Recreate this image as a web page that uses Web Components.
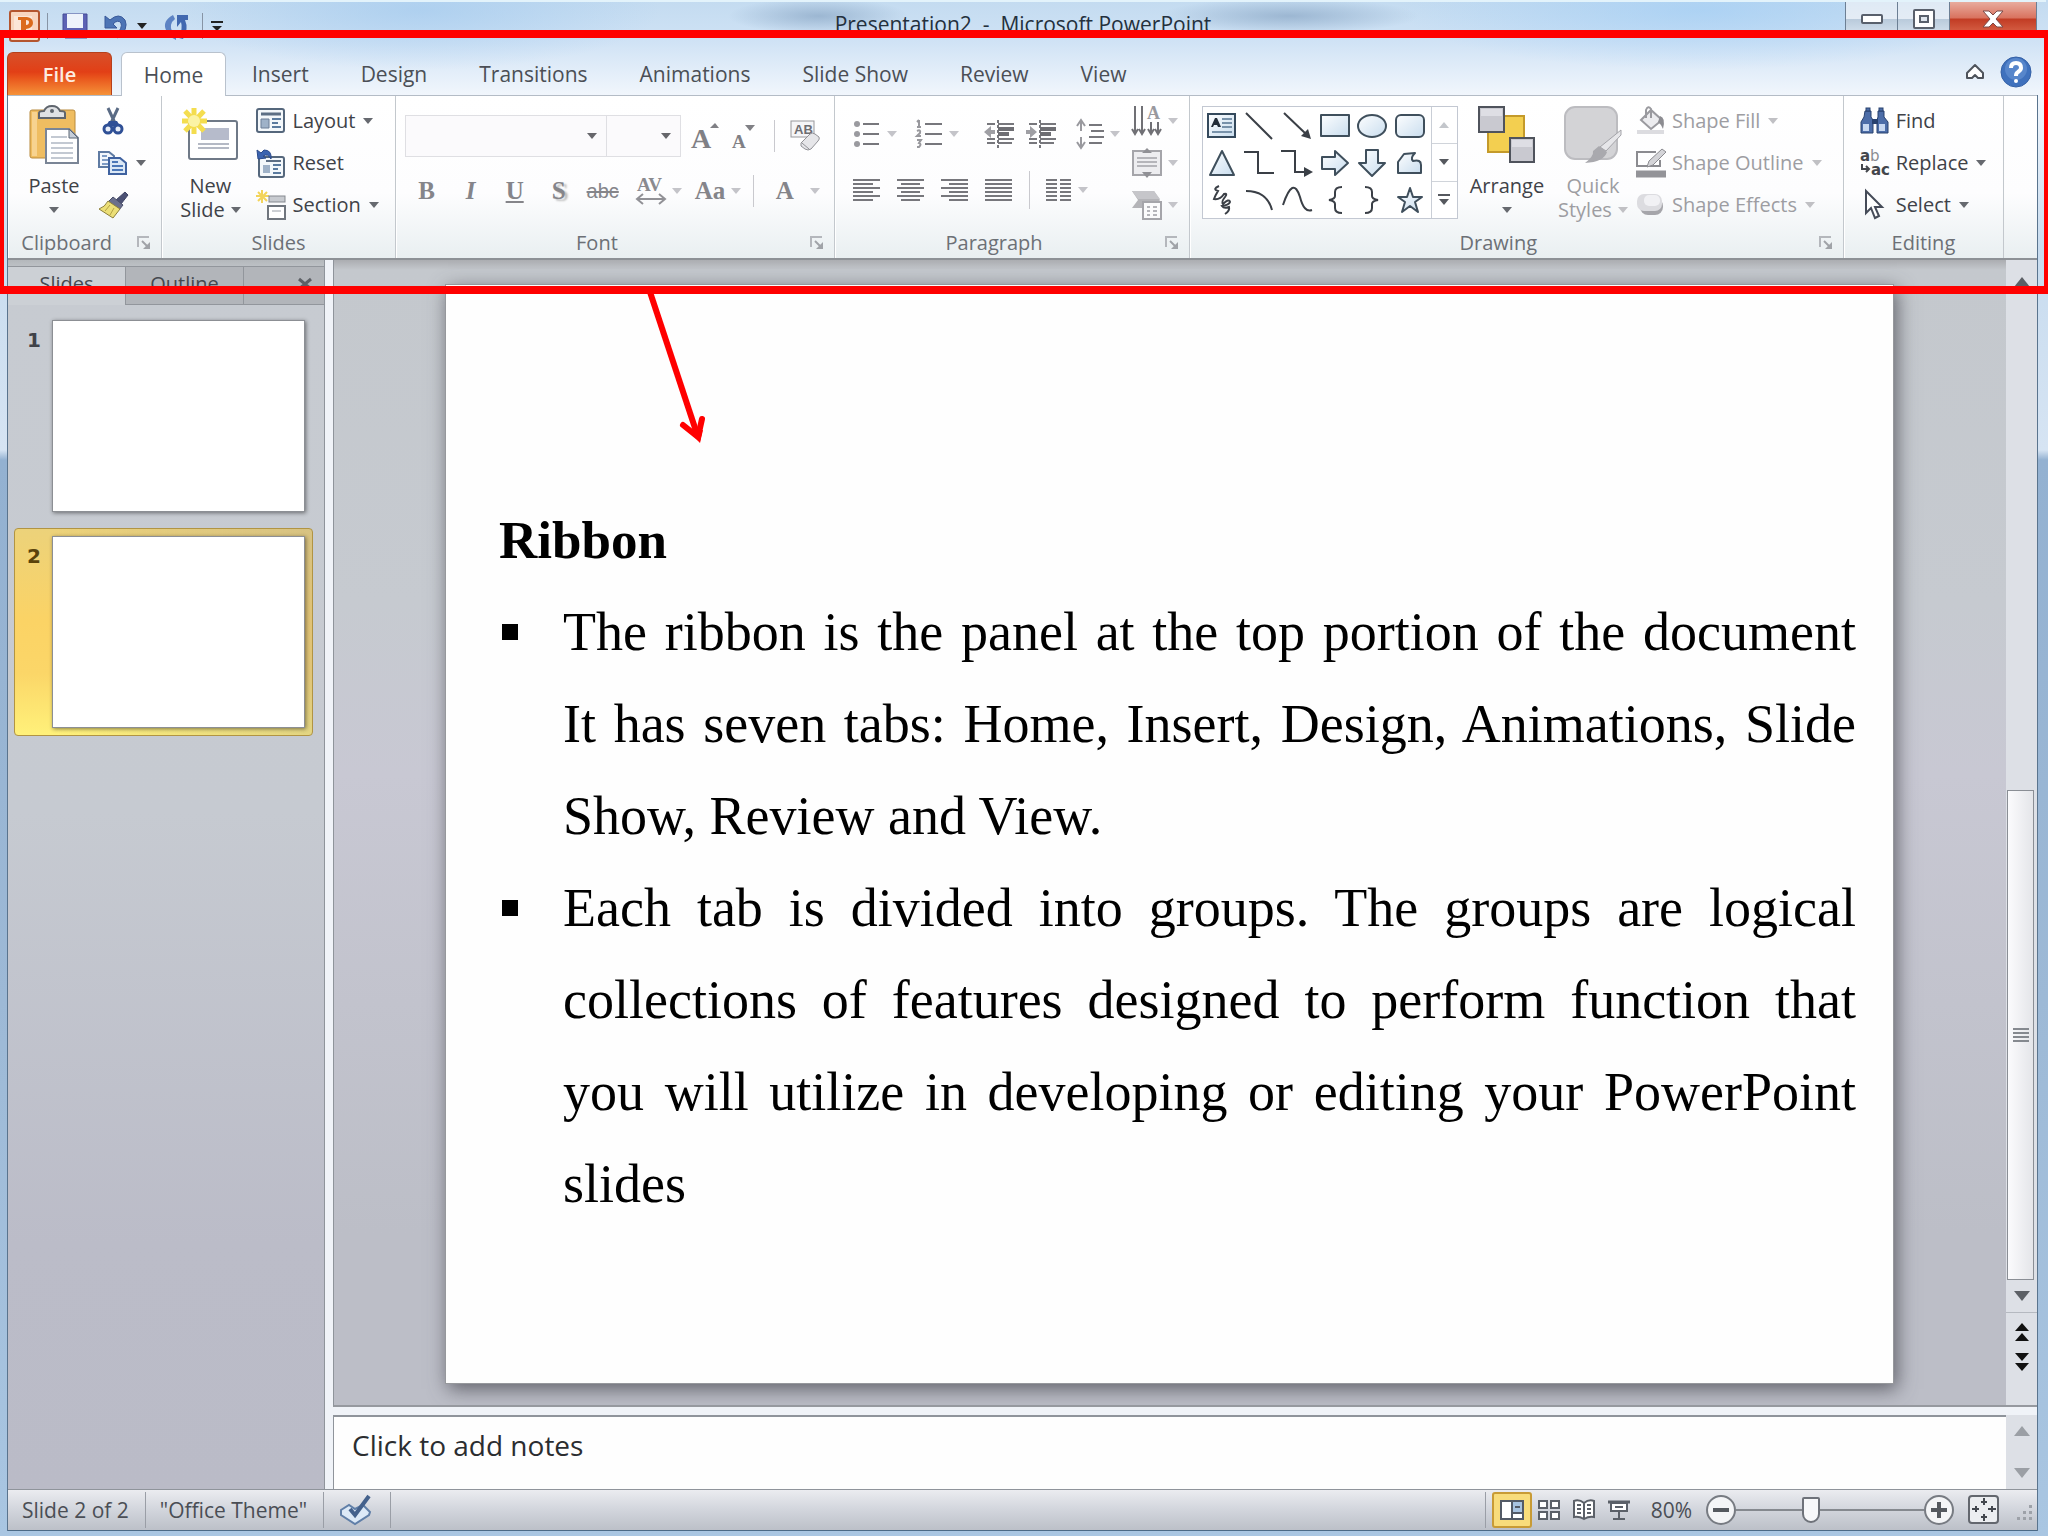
<!DOCTYPE html>
<html lang="en">
<head>
<meta charset="utf-8">
<title>Presentation2 - Microsoft PowerPoint</title>
<style>
  body { margin: 0; font-family: "Open Sans", "Noto Sans", sans-serif; font-size: 20px; color: #3f4248; }
</style>
</head>
<body>
<pp-app></pp-app>

<script>
const BASE = `
  :host, *, *::before, *::after { box-sizing: border-box; }
  button, select, textarea, input { font: inherit; color: inherit; margin: 0; }
  button { background: none; border: 0; padding: 0; display: flex; align-items: center; }
`;

function define(name, css, html) {
  customElements.define(name, class extends HTMLElement {
    connectedCallback() {
      if (this.shadowRoot) return;
      const root = this.attachShadow({ mode: 'open' });
      const body = typeof html === 'function' ? html(this) : html;
      root.innerHTML = `<style>${BASE}${css}</style>${body}`;
    }
  });
}

/* ---------- icons: [width, height, markup] ---------- */
const lines = (list, c = '#77777c', w = 2) => `<path d="${list.map(([x1, x2, y]) => `M${x1} ${y}H${x2}`).join('')}" stroke="${c}" stroke-width="${w}" fill="none"/>`;
const shape = d => `<path d="${d}" fill="url(#g)" stroke="#3f4f5c" stroke-width="2" stroke-linejoin="round"/>`;
const stroke = d => `<path d="${d}" fill="none" stroke="#3a3f46" stroke-width="2"/>`;
const G = `<defs><linearGradient id="g" x1="0" y1="0" x2="1" y2="1"><stop offset="0" stop-color="#fdfeff"/><stop offset="1" stop-color="#c9ddee"/></linearGradient></defs>`;

const ICONS = {
  down: [10, 6, `<path d="M0 0H10L5 6Z" fill="currentColor"/>`],
  up: [10, 6, `<path d="M0 6H10L5 0Z" fill="currentColor"/>`],
  bigdown: [16, 10, `<path d="M0 0H16L8 10Z" fill="currentColor"/>`],
  bigup: [16, 10, `<path d="M0 10H16L8 0Z" fill="currentColor"/>`],
  dblup: [14, 18, `<path d="M0 8L7 0L14 8ZM0 18L7 10L14 18Z" fill="#111"/>`],
  dbldown: [14, 18, `<path d="M0 0L7 8L14 0ZM0 10L7 18L14 10Z" fill="#111"/>`],
  more: [12, 11, `<path d="M0 1H12" stroke="currentColor" stroke-width="2"/><path d="M1 5H11L6 11Z" fill="currentColor"/>`],
  custom: [12, 9, `<path d="M0 1H12" stroke="#222" stroke-width="2"/><path d="M1 5H11L6 10Z" fill="#222"/>`],
  launcher: [14, 14, `<path d="M1 11V1H12" fill="none" stroke="#b4b7bc" stroke-width="2"/><path d="M5 5L11 11" stroke="#a0a3a8" stroke-width="2"/><path d="M13 6V13H6Z" fill="#a0a3a8"/>`],
  ppt: [31, 32, `<rect x="1" y="1" width="29" height="30" rx="2" fill="#f8d5bf" stroke="#b4552f" stroke-width="2"/><path d="M5 6H23V26H5Z" fill="#fbe6d8"/><path d="M9 26V23H12V10H9V7H18Q24 8 24 13Q24 18 17 19V23H19V26ZM17 10V15Q20 15 20 12Q20 10 17 10Z" fill="#db6a1c" fill-rule="evenodd"/>`],
  save: [26, 26, `<path d="M1 1H25V25H3L1 23Z" fill="#5d62b4" stroke="#444a96"/><path d="M5 1H21V15H5Z" fill="#eef3fb"/><path d="M6 18H20V25H6Z" fill="#dfe4f2"/><path d="M9 19H13V25H9Z" fill="#4a4f9c"/>`],
  undo: [24, 26, `<path d="M1 3V15H13L9 11Q14 6 17 10Q19 15 11 23L14 25Q25 16 21 7Q15 -1 6 7Z" fill="#4d74b5" stroke="#39599a"/>`],
  redo: [25, 26, `<path d="M9 2Q-2 8 2 17Q5 24 12 27L12 23Q6 17 7 12Q8 8 11 6Z" fill="#5d83c4"/><path d="M13 2H24V7H21Q25 16 19 26L15 25Q19 15 17 9L13 14Z" fill="#4168b0"/>`],
  paste: [50, 60, `<rect x="1" y="5" width="45" height="48" rx="2" fill="#efbd61" stroke="#b98a3d"/><path d="M3 7H8V51H3Z" fill="#f7d390"/><path d="M10 13V8Q10 6 15 6Q17 1 23 1Q29 1 31 6Q36 6 36 8V13Z" fill="#dfe1e4" stroke="#5f656d" stroke-width="2"/><circle cx="23" cy="6" r="2" fill="#5f656d"/><path d="M17 24H40L49 33V58H17Z" fill="#fff" stroke="#7a8596" stroke-width="2"/><path d="M40 24V33H49Z" fill="#c6ced9" stroke="#5b6675"/>${lines([[22, 38, 32], [22, 44, 38], [22, 44, 43], [22, 44, 48], [22, 44, 53]], '#c3c9d2')}`],
  cut: [30, 28, `<path d="M10 1L17 16M20 1L13 16" stroke="#5a6b85" stroke-width="3"/><path d="M11 14H19L22 19H8Z" fill="#2f5096"/><ellipse cx="10" cy="22" rx="4" ry="4" fill="#e8eef8" stroke="#2f5096" stroke-width="3"/><ellipse cx="20" cy="22" rx="4" ry="4" fill="#e8eef8" stroke="#2f5096" stroke-width="3"/>`],
  copy: [30, 26, `<path d="M1 2H11L16 6V17H1Z" fill="#f3f7fc" stroke="#5f7ba3" stroke-width="2"/>${lines([[4, 9, 6], [4, 12, 10], [4, 12, 14]], '#7f9cc4')}<path d="M11 8H22L28 13V24H11Z" fill="#dbe8f6" stroke="#3f62a0" stroke-width="2"/>${lines([[14, 20, 12], [14, 25, 16], [14, 25, 20]], '#4c78b8')}`],
  painter: [30, 28, `<path d="M27 1L30 4L23 13L18 9Z" fill="#4c5174" stroke="#3e4364"/><path d="M15 6L25 14L21 19L10 11Z" fill="#6a6f8c" stroke="#4a4f6a"/><path d="M10 10L22 18L15 27L1 18Q7 16 10 10Z" fill="#ecdf77" stroke="#8d803a"/><path d="M12 14L7 20M16 17L12 24" stroke="#b4a345"/>`],
  newslide: [56, 54, `<rect x="7" y="13" width="48" height="38" rx="2" fill="#fff" stroke="#6f7987" stroke-width="2"/><rect x="19" y="20" width="28" height="12" fill="#b6bbcb"/>${lines([[16, 47, 36], [16, 47, 40]], '#b4b9c4', 2)}<path d="M12 0V26M0 13H25M3 3L22 23M22 3L3 23" stroke="#f4dd4f" stroke-width="5"/><circle cx="12" cy="13" r="6" fill="#fbf3a5"/>`],
  layout: [30, 26, `<rect x="1" y="1" width="27" height="23" rx="2" fill="#f4f8fb" stroke="#55677c" stroke-width="2"/><path d="M5 6H25" stroke="#5d6f85" stroke-width="3"/><path d="M5 11H13V20H5Z" fill="#9fb2c8" stroke="#6c7f97"/>${lines([[16, 25, 11], [16, 22, 15], [16, 25, 19]], '#5b7b9f')}`],
  reset: [30, 30, `<rect x="3" y="9" width="25" height="20" rx="2" fill="#f4f8fb" stroke="#55677c" stroke-width="2"/><path d="M10 13H25" stroke="#5d6f85" stroke-width="2"/><path d="M7 17H14V25H7Z" fill="#9fb2c8"/>${lines([[17, 25, 17], [17, 22, 21], [17, 25, 25]], '#5b7b9f')}<path d="M1 2L2 11L10 10L7 8Q12 5 15 11Q16 2 8 2L5 5Z" fill="#3c64b0" stroke="#2a4a8c"/>`],
  section: [30, 30, `<path d="M6 0V13M0 6H13M2 2L11 11M11 2L2 11" stroke="#f3d45a" stroke-width="2"/><rect x="13" y="6" width="16" height="6" fill="#c8cbd0" stroke="#85898f"/><rect x="12" y="16" width="17" height="13" fill="#fff" stroke="#6f757d" stroke-width="2"/><path d="M16 21H25" stroke="#9aa0a8"/>`],
  eraser: [32, 30, `<rect x="1" y="0" width="23" height="16" fill="#f5f5f7" stroke="#98989c"/><text x="4" y="13" font-family="Liberation Sans" font-size="13" fill="#6d6d72">AB</text><path d="M11 22L20 13Q22 11 25 13L29 16Q30 18 28 20L21 28Q18 30 15 28L11 25Z" fill="#e6e6e9" stroke="#929297"/><path d="M12 22L19 28" stroke="#929297"/>`],
  growA: [28, 26, `<text x="0" y="25" font-family="Liberation Serif" font-weight="bold" font-size="28" fill="#808085">A</text><path d="M19 5L24 0L28 5Z" fill="#808085"/>`],
  shrinkA: [24, 26, `<text x="0" y="25" font-family="Liberation Serif" font-weight="bold" font-size="19" fill="#808085">A</text><path d="M13 2H23L18 8Z" fill="#808085"/>`],
  spacingAV: [30, 30, `<text x="1" y="15" font-family="Liberation Serif" font-size="19" font-weight="bold" fill="#8a8a8f">AV</text><path d="M1 23H29M7 18L1 23L7 28M23 18L29 23L23 28" stroke="#919196" stroke-width="2" fill="none"/>`],
  bullets: [28, 26, `<g fill="#9a9a9f"><circle cx="4" cy="3" r="3"/><circle cx="4" cy="13" r="3"/><circle cx="4" cy="23" r="3"/></g>${lines([[10, 26, 3], [10, 26, 13], [10, 26, 23]])}`],
  numbers: [28, 28, `<path d="M4 0V7M2 2L4 0M2 7H6M2 11Q6 9 5 13L2 16H6M2 20H6L4 23Q7 24 4 27H2" stroke="#98989d" fill="none" stroke-width="2"/>${lines([[10, 27, 4], [10, 27, 14], [10, 27, 24]])}`],
  outdent: [30, 28, `<path d="M14 0V28" stroke="#77777c" stroke-width="2" stroke-dasharray="3 2"/>${lines([[3, 11, 4], [3, 11, 19], [3, 11, 23], [14, 30, 4], [14, 30, 19], [14, 28, 23]])}<path d="M14 9H30M14 14H25" stroke="#6e6e73" stroke-width="4"/><path d="M0 12L7 6V10H11V14H7V18Z" fill="#9f9fa4"/>`],
  indent: [30, 28, `<path d="M14 0V28" stroke="#77777c" stroke-width="2" stroke-dasharray="3 2"/>${lines([[3, 11, 4], [3, 11, 19], [3, 11, 23], [14, 30, 4], [14, 30, 19], [14, 28, 23]])}<path d="M14 9H30M14 14H25" stroke="#6e6e73" stroke-width="4"/><path d="M11 12L4 6V10H0V14H4V18Z" fill="#9f9fa4"/>`],
  linespace: [28, 30, `<path d="M5 2V12M1 7L5 1L9 7M5 18V28M1 23L5 29L9 23" stroke="#99999e" stroke-width="2" fill="none"/>${lines([[13, 26, 6], [15, 28, 12], [13, 28, 18], [13, 26, 24]])}`],
  left: [28, 24, lines([[0, 27, 2], [0, 20, 6], [0, 27, 10], [0, 20, 14], [0, 27, 18], [0, 20, 22]])],
  center: [28, 24, lines([[0, 27, 2], [4, 23, 6], [0, 27, 10], [4, 23, 14], [0, 27, 18], [4, 23, 22]])],
  right: [28, 24, lines([[0, 27, 2], [8, 27, 6], [0, 27, 10], [8, 27, 14], [0, 27, 18], [8, 27, 22]])],
  justify: [28, 24, lines([[0, 27, 2], [0, 27, 6], [0, 27, 10], [0, 27, 14], [0, 27, 18], [0, 27, 22]])],
  columns: [26, 24, lines([2, 6, 10, 14, 18, 22].flatMap(y => [[0, 11, y], [14, 25, y]]))],
  textdir: [30, 30, `<path d="M3 0V27M10 0V27M19 16V27M26 16V27M0 23L3 28L6 23M7 23L10 28L13 23M16 23L19 28L22 23M23 23L26 28L29 23" stroke="#707075" stroke-width="2" fill="none"/><text x="15" y="13" font-family="Liberation Serif" font-size="18" font-weight="bold" fill="#99999e">A</text>`],
  aligntext: [30, 30, `<rect x="1" y="3" width="28" height="24" fill="#ededf0" stroke="#a5a5aa" stroke-width="2"/>${lines([[5, 25, 10], [5, 25, 14], [5, 25, 18]], '#b5b5ba')}<path d="M15 0L20 5H10ZM15 30L20 24H10Z" fill="#909095"/>`],
  smartart: [30, 30, `<path d="M0 1H22L28 10L22 18H0L6 10Z" fill="#b4b4b8"/><path d="M0 1H22L28 9H6Z" fill="#c6c6ca"/><rect x="11" y="12" width="18" height="17" fill="#fbfbfc" stroke="#a5a5aa" stroke-width="2"/>${lines([[15, 18, 17], [21, 25, 17], [15, 18, 21], [21, 25, 21], [15, 18, 25], [21, 25, 25]], '#b5b5ba')}`],
  textbox: [30, 26, G + `<rect x="1" y="1" width="27" height="23" fill="url(#g)" stroke="#34495c" stroke-width="2"/><path d="M4 14L8 5H10L14 14H11L10 12H7L6 14Z" fill="#222c38"/>${lines([[15, 25, 6], [15, 25, 10], [15, 25, 14], [5, 25, 19]], '#7892aa')}`],
  line: [30, 28, stroke('M2 1L28 27')],
  arrow: [30, 28, stroke('M2 1L24 22') + `<path d="M29 27L19 24L26 17Z" fill="#3a3f46"/>`],
  rect: [30, 24, G + shape('M1 1H29V22H1Z')],
  oval: [30, 24, G + `<ellipse cx="15" cy="12" rx="14" ry="11" fill="url(#g)" stroke="#3f4f5c" stroke-width="2"/>`],
  round: [30, 24, G + `<rect x="1" y="1" width="28" height="22" rx="5" fill="url(#g)" stroke="#3f4f5c" stroke-width="2"/>`],
  triangle: [26, 28, G + shape('M13 2L25 26H1Z')],
  elbow: [30, 26, stroke('M0 2H14V23H30')],
  elbowarrow: [32, 28, stroke('M0 2H14V23H25') + `<path d="M23 18L32 23L23 28Z" fill="#3a3f46"/>`],
  arrowr: [28, 28, G + shape('M1 8H14V2L27 14L14 26V20H1Z')],
  arrowd: [28, 28, G + shape('M8 1H20V14H27L14 27L1 14H8Z')],
  freeform: [26, 22, G + shape('M7 2L18 1Q13 6 16 9Q24 7 24 13V21H1V10Z')],
  scribble: [22, 30, stroke('M8 1Q1 4 7 6Q4 11 3 14Q9 15 13 9Q17 8 14 12Q10 17 12 19Q18 13 19 17Q18 20 11 21Q13 24 18 22Q19 26 14 29')],
  arc: [28, 22, stroke('M1 2Q22 2 27 21')],
  curve: [30, 26, stroke('M1 18Q11 -12 18 10Q22 26 30 23')],
  braceL: [16, 28, stroke('M15 1Q8 1 8 6V10Q8 13 2 14Q8 15 8 18V22Q8 27 15 27')],
  braceR: [16, 28, stroke('M1 1Q8 1 8 6V10Q8 13 14 14Q8 15 8 18V22Q8 27 1 27')],
  star: [28, 28, G + shape('M14 2L17 11H26L19 16L22 26L14 20L6 26L9 16L2 11H11Z')],
  arrange: [58, 58, `<rect x="10" y="10" width="36" height="36" fill="#f3cf50" stroke="#c49a2a" stroke-width="2"/><g fill="#c9c9d0" stroke="#4f535c" stroke-width="2"><rect x="1" y="1" width="25" height="25"/><rect x="32" y="32" width="24" height="24"/></g><path d="M3 3H24V10H3ZM34 34H54V41H34Z" fill="#dedee4"/>`],
  quick: [58, 58, `<rect x="1" y="1" width="52" height="52" rx="10" fill="#d3d3d6" stroke="#bcbcc0" stroke-width="2"/><path d="M57 24V29L42 45L36 41Z" fill="#e6e6e9" stroke="#a4a4a9"/><path d="M35 40L43 46Q40 56 21 57Q30 50 29 45Z" fill="#a9a9ae"/>`],
  fill: [30, 30, `<path d="M5 14L15 4L26 14L15 23Z" fill="#ececef" stroke="#9a9a9f" stroke-width="2"/><path d="M10 12V4Q12 -1 15 3V12" fill="none" stroke="#9a9a9f" stroke-width="2"/><path d="M24 10Q30 12 27 23Q25 18 22 16Z" fill="#8c8c91"/><path d="M1 26H28" stroke="#dcdce0" stroke-width="4"/>`],
  outline: [30, 30, `<path d="M20 4H1V18H24V12" fill="none" stroke="#8b8b90" stroke-width="2"/><path d="M26 1L30 4L17 17L11 19L13 13Z" fill="#d4d4d8" stroke="#8b8b90"/><path d="M0 26H30" stroke="#939398" stroke-width="7"/>`],
  effects: [30, 30, `<rect x="4" y="8" width="23" height="17" rx="8" fill="#a5a5aa"/><rect x="1" y="4" width="25" height="17" rx="7" fill="#dcdce0"/><rect x="8" y="5" width="16" height="11" rx="5" fill="#f1f1f4"/>`],
  find: [30, 28, `<g fill="#4c6da8" stroke="#29426f"><path d="M5 4H11V10L13 13V26H1V15L4 10Z"/><path d="M18 4H24V10L28 15V26H17V13L18 10Z"/><rect x="6" y="1" width="4" height="3"/><rect x="19" y="1" width="4" height="3"/></g><path d="M3 17H9V24H3ZM19 17H25V24H19Z" fill="#c7d8f1"/><path d="M12 12H18V17H12Z" fill="#29426f"/>`],
  replace: [30, 30, `<g font-family="DejaVu Sans" font-weight="bold" fill="#43464c"><text x="0" y="13" font-size="15">a</text><text x="10" y="13" font-size="15" font-weight="normal" fill="#8a8d93">b</text><text x="11" y="27" font-size="15">ac</text></g><path d="M2 16V21H8M6 18L9 21L6 24" fill="none" stroke="#43464c" stroke-width="2"/>`],
  select: [30, 30, `<path d="M6 1V23L11 18L15 28L19 26L15 17H22Z" fill="#fff" stroke="#454b58" stroke-width="2"/>`],
  chevron: [18, 16, `<path d="M1 9L9 1L17 9V14H12L9 11L6 14H1Z" fill="#fff" stroke="#4e535b" stroke-width="2" stroke-linejoin="round"/>`],
  help: [32, 32, `<circle cx="16" cy="16" r="15" fill="#3f71bd" stroke="#3561a6"/><circle cx="16" cy="13" r="11" fill="#6f9bd9" opacity=".5"/><path d="M11 12Q11 7 16 7Q21 7 21 12Q21 14 18 16Q16 17 16 20" stroke="#fff" stroke-width="4" fill="none"/><circle cx="16" cy="25" r="2" fill="#fff"/>`],
  min: [22, 10, `<rect x="1" y="1" width="20" height="8" rx="1" fill="#fff" stroke="#59606c" stroke-width="2"/>`],
  max: [22, 20, `<rect x="1" y="1" width="20" height="18" rx="1" fill="#fff" stroke="#59606c" stroke-width="2"/><rect x="7" y="7" width="8" height="6" fill="#dfe6ee" stroke="#59606c" stroke-width="2"/>`],
  close: [22, 18, `<path d="M1 1H7L11 5L15 1H21L14 9L21 17H15L11 13L7 17H1L8 9Z" fill="#fff" stroke="#7b4a48"/>`],
  x: [14, 12, `<path d="M1 1L13 11M13 1L1 11" stroke="#5d6066" stroke-width="3"/>`],
  spell: [34, 30, `<path d="M2 15L10 10L16 14L24 10L31 17L30 20L16 29L2 20Z" fill="#dce9f7" stroke="#607fa8" stroke-width="2"/><path d="M11 14L16 20L30 1" fill="none" stroke="#44618c" stroke-width="4"/>`],
  normal: [24, 20, `<rect x="1" y="1" width="22" height="18" fill="#fff" stroke="#535a66" stroke-width="2"/><rect x="13" y="2" width="9" height="10" fill="#a8c3e0"/><path d="M12 1V19M12 13H23M15 7H20" stroke="#535a66" stroke-width="2"/>`],
  sorter: [22, 20, `<g fill="#fff" stroke="#5b6068" stroke-width="2"><rect x="1" y="1" width="8" height="7"/><rect x="13" y="1" width="8" height="7"/><rect x="1" y="12" width="8" height="7"/><rect x="13" y="12" width="8" height="7"/></g>`],
  reading: [22, 22, `<path d="M11 4Q6 0 1 2V18Q6 17 11 20Q16 17 21 18V2Q16 0 11 4V20" fill="#fff" stroke="#5b6068" stroke-width="2"/><path d="M4 6H8M4 10H8M4 14H8M14 6H18M14 10H18M14 14H18" stroke="#5b6068" stroke-width="2"/>`],
  show: [22, 20, `<path d="M0 2H22" stroke="#5b6068" stroke-width="3"/><path d="M3 3H19V11H3Z" fill="#fff" stroke="#5b6068" stroke-width="2"/><path d="M7 7H15M11 11V18M5 19H17" stroke="#5b6068" stroke-width="2"/>`],
  minus: [30, 30, `<circle cx="15" cy="15" r="14" fill="#f4f5f7" stroke="#777b82" stroke-width="2"/><path d="M7 15H23" stroke="#55595f" stroke-width="4"/>`],
  plus: [30, 30, `<circle cx="15" cy="15" r="14" fill="#f4f5f7" stroke="#777b82" stroke-width="2"/><path d="M7 15H23M15 7V23" stroke="#55595f" stroke-width="4"/>`],
  fit: [32, 30, `<rect x="1" y="1" width="29" height="27" rx="3" fill="#eceef1" stroke="#63676e" stroke-width="2"/><path d="M16 3V10M16 19V26M4 14H11M20 14H28M13 7H19M13 22H19M8 11V17M24 11V17" stroke="#44484f" fill="none" stroke-width="2"/>`],
  grip: [18, 18, `<g fill="#9da1a8"><path d="M13 1H16V4H13ZM7 7H10V10H7ZM13 7H16V10H13ZM1 13H4V16H1ZM7 13H10V16H7ZM13 13H16V16H13Z"/></g>`],
  lines4: [16, 14, lines([[0, 16, 1], [0, 16, 5], [0, 16, 9], [0, 16, 13]], '#85898f', 2)]
};

define('pp-icon', `:host { display: inline-flex; flex: none; } svg { display: block; overflow: visible; }`,
  el => { const [w, h, m] = ICONS[el.getAttribute('name')]; return `<svg width="${w}" height="${h}" viewBox="0 0 ${w} ${h}" aria-hidden="true">${m}</svg>`; });

/* ---------- ribbon parts ---------- */
define('rb-button', `
  :host { display: block; }
  :host([disabled]) { color: #9d9da2; }
  button { width: 100%; height: 42px; gap: 6px; line-height: 24px; white-space: nowrap; padding: 0 0 0 6px; }
  .pic { width: 30px; display: flex; justify-content: center; }
  .arrow { color: #66696f; display: flex; padding-left: 2px; }
  :host([disabled]) .arrow { color: #c0c0c4; }
  :host([big]) button { flex-direction: column; height: auto; padding: 0; gap: 0; }
  :host([big]) .pic { width: auto; height: 74px; align-items: center; padding-bottom: 5px; }
  :host([big]) .row { height: 24px; display: flex; align-items: center; gap: 6px; }
  :host([big]) .arrow { padding: 0; }
`, el => {
  const a = n => el.getAttribute(n), dis = el.hasAttribute('disabled') ? 'disabled' : '';
  const arrow = el.hasAttribute('menu') ? '<span class="arrow"><pp-icon name="down"></pp-icon></span>' : '';
  const pic = `<span class="pic"><pp-icon name="${a('icon')}"></pp-icon></span>`;
  if (el.hasAttribute('big'))
    return `<button ${dis}>${pic}<span>${a('label')}</span><span class="row">${a('second') ? `<span>${a('second')}</span>` : ''}${arrow}</span></button>`;
  return `<button ${dis} aria-label="${a('label') || a('hint')}">${pic}${a('label') ? `<span>${a('label')}</span>` : ''}${arrow}</button>`;
});

define('rb-tool', `
  :host { display: block; color: #85858a; }
  button { height: 42px; gap: 6px; font: bold 25px/42px "Liberation Serif", serif; }
  .arrow { color: #c4c4c9; display: flex; }
`, el => `<button disabled aria-label="${el.getAttribute('hint')}">${el.hasAttribute('icon') ? `<pp-icon name="${el.getAttribute('icon')}"></pp-icon>` : '<slot></slot>'}${el.hasAttribute('menu') ? '<span class="arrow"><pp-icon name="down"></pp-icon></span>' : ''}</button>`);

define('rb-group', `
  :host { display: flex; flex-direction: column; min-width: 0; border-right: 1px solid #c3c8cd; box-shadow: inset 1px 0 #fff; }
  .content { flex: 1; display: flex; padding-top: 4px; }
  footer { display: flex; height: 31px; align-items: center; color: #6c7076; }
  footer span { flex: 1; text-align: center; }
  footer button { width: 36px; padding-left: 12px; }
`, el => `<div class="content"><slot></slot></div><footer><span>${el.getAttribute('label')}</span>${el.hasAttribute('launcher') ? '<button aria-label="Dialog launcher"><pp-icon name="launcher"></pp-icon></button>' : ''}</footer>`);

define('rb-clipboard', `:host { display: flex; padding-left: 8px; } rb-button[big] { width: 76px; }`, `
  <rb-button big menu icon="paste" label="Paste"></rb-button>
  <div><rb-button icon="cut" hint="Cut"></rb-button><rb-button icon="copy" hint="Copy" menu></rb-button><rb-button icon="painter" hint="Format Painter"></rb-button></div>`);

define('rb-slides', `:host { display: flex; padding-left: 8px; } rb-button[big] { width: 80px; }`, `
  <rb-button big menu icon="newslide" label="New" second="Slide"></rb-button>
  <div><rb-button icon="layout" label="Layout" menu></rb-button><rb-button icon="reset" label="Reset"></rb-button><rb-button icon="section" label="Section" menu></rb-button></div>`);

define('rb-font', `
  :host { display: flex; flex-direction: column; gap: 13px; padding: 15px 0 0 9px; }
  .row { display: flex; align-items: center; height: 42px; }
  .combo { display: grid; align-items: center; width: 202px; color: #66666b; }
  .combo.size { width: 75px; margin-left: -1px; }
  .combo > * { grid-area: 1 / 1; }
  .combo pp-icon { justify-self: end; padding-right: 10px; pointer-events: none; }
  select { appearance: none; width: 100%; height: 42px; background: #fbfafc; border: 1px solid #dfdfe3; border-radius: 0; opacity: 1; }
  .sep { width: 1px; height: 32px; background: #c9c9ce; }
  .grow { padding-left: 10px; width: 51px; } .shrink { width: 42px; } .clear { padding-left: 15px; }
  .fmt { display: flex; justify-content: center; width: 44px; }
  .wide { width: 58px; } .av { width: 70px; padding-left: 11px; }
  .s { text-shadow: 3px 2px 2px #bbb; } .abc { font: 20px "Liberation Sans", sans-serif; text-decoration: line-through; }
  .color { padding-left: 22px; }
  .color span { padding-right: 10px; }
`, `
  <div class="row">
    <label class="combo"><select disabled aria-label="Font name"><option></option></select><pp-icon name="down"></pp-icon></label>
    <label class="combo size"><select disabled aria-label="Font size"><option></option></select><pp-icon name="down"></pp-icon></label>
    <rb-tool class="grow" icon="growA" hint="Grow Font"></rb-tool><rb-tool class="shrink" icon="shrinkA" hint="Shrink Font"></rb-tool>
    <span class="sep"></span><rb-tool class="clear" icon="eraser" hint="Clear Formatting"></rb-tool>
  </div>
  <div class="row">
    <rb-tool class="fmt" hint="Bold">B</rb-tool><rb-tool class="fmt" hint="Italic"><i>I</i></rb-tool><rb-tool class="fmt" hint="Underline"><u>U</u></rb-tool>
    <rb-tool class="fmt" hint="Shadow"><span class="s">S</span></rb-tool><rb-tool class="fmt" hint="Strikethrough"><span class="abc">abc</span></rb-tool>
    <rb-tool class="av" icon="spacingAV" hint="Character Spacing" menu></rb-tool><rb-tool class="wide" hint="Change Case" menu>Aa</rb-tool>
    <span class="sep"></span><rb-tool class="color" hint="Font Color" menu><span>A</span></rb-tool>
  </div>`);

define('rb-paragraph', `
  :host { display: flex; padding-left: 18px; }
  .left { width: 279px; padding-top: 13px; display: flex; flex-direction: column; gap: 14px; }
  .row { display: flex; align-items: center; height: 42px; }
  .sep { width: 1px; height: 38px; background: #c9c9ce; }
  .a { width: 62px; } .b { width: 69px; } .c { width: 42px; } .d { width: 50px; } .e { width: 44px; } .f { padding-left: 16px; }
`, `
  <div class="left">
    <div class="row"><rb-tool class="a" icon="bullets" hint="Bullets" menu></rb-tool><rb-tool class="b" icon="numbers" hint="Numbering" menu></rb-tool><rb-tool class="c" icon="outdent" hint="Decrease List Level"></rb-tool><rb-tool class="d" icon="indent" hint="Increase List Level"></rb-tool><rb-tool icon="linespace" hint="Line Spacing" menu></rb-tool></div>
    <div class="row"><rb-tool class="e" icon="left" hint="Align Left"></rb-tool><rb-tool class="e" icon="center" hint="Center"></rb-tool><rb-tool class="e" icon="right" hint="Align Right"></rb-tool><rb-tool class="e" icon="justify" hint="Justify"></rb-tool><span class="sep"></span><rb-tool class="f" icon="columns" hint="Columns" menu></rb-tool></div>
  </div>
  <div><rb-tool icon="textdir" hint="Text Direction" menu></rb-tool><rb-tool icon="aligntext" hint="Align Text" menu></rb-tool><rb-tool icon="smartart" hint="Convert to SmartArt" menu></rb-tool></div>`);

define('rb-gallery', `
  :host { display: flex; width: 256px; height: 113px; margin-top: 6px; border: 1px solid #c3c8d2; background: #fff; }
  .grid { flex: 1; display: grid; grid-template: repeat(3, 1fr) / repeat(6, 1fr); padding-right: 2px; }
  .grid button { justify-content: center; }
  .scroll { width: 26px; display: flex; flex-direction: column; border-left: 1px solid #c9ced6; color: #55585e; }
  .scroll button { flex: 1; justify-content: center; border-bottom: 1px solid #d0d4da; }
  .scroll button:first-child { color: #c3c6cb; } .scroll button:last-child { border: 0; }
`, `<div class="grid">${['textbox', 'line', 'arrow', 'rect', 'oval', 'round', 'triangle', 'elbow', 'elbowarrow', 'arrowr', 'arrowd', 'freeform', 'scribble', 'arc', 'curve', 'braceL', 'braceR', 'star'].map(n => `<button aria-label="${n}"><pp-icon name="${n}"></pp-icon></button>`).join('')}</div>
  <div class="scroll"><button aria-label="Up"><pp-icon name="up"></pp-icon></button><button aria-label="Down"><pp-icon name="down"></pp-icon></button><button aria-label="More"><pp-icon name="more"></pp-icon></button></div>`);

define('rb-drawing', `:host { display: flex; padding-left: 12px; } .arr { width: 98px; } .qs { width: 74px; }`, `
  <rb-gallery></rb-gallery>
  <rb-button class="arr" big menu icon="arrange" label="Arrange"></rb-button>
  <rb-button class="qs" big menu disabled icon="quick" label="Quick" second="Styles"></rb-button>
  <div><rb-button disabled menu icon="fill" label="Shape Fill"></rb-button><rb-button disabled menu icon="outline" label="Shape Outline"></rb-button><rb-button disabled menu icon="effects" label="Shape Effects"></rb-button></div>`);

define('rb-editing', `:host { display: block; padding-left: 10px; }`, `
  <rb-button icon="find" label="Find"></rb-button><rb-button icon="replace" label="Replace" menu></rb-button><rb-button icon="select" label="Select" menu></rb-button>`);

define('pp-ribbon', `
  :host { display: flex; height: 165px; border-top: 1px solid #b4bcc6; border-bottom: 2px solid #8d9196;
    background: linear-gradient(#fff 0, #fdfdfe 60%, #e9eff1 100%); }
  rb-group { flex: 1 1 0; }
  .g1 { flex-grow: 154; } .g2 { flex-grow: 233; } .g3 { flex-grow: 440; } .g4 { flex-grow: 355; } .g5 { flex-grow: 655; } .g6 { flex-grow: 160; }
  .rest { flex: 33 1 0; }
`, `
  <rb-group class="g1" label="Clipboard" launcher><rb-clipboard></rb-clipboard></rb-group>
  <rb-group class="g2" label="Slides"><rb-slides></rb-slides></rb-group>
  <rb-group class="g3" label="Font" launcher><rb-font></rb-font></rb-group>
  <rb-group class="g4" label="Paragraph" launcher><rb-paragraph></rb-paragraph></rb-group>
  <rb-group class="g5" label="Drawing" launcher><rb-drawing></rb-drawing></rb-group>
  <rb-group class="g6" label="Editing"><rb-editing></rb-editing></rb-group>
  <span class="rest"></span>`);

/* ---------- title bar and tabs ---------- */
define('pp-titlebar', `
  :host { display: flex; height: 42px; border-top: 2px solid #e3f3fb;
    background: radial-gradient(ellipse 90px 18px at 40% 14px, #86a3c2aa, transparent), radial-gradient(ellipse 130px 18px at 63% 14px, #86a3c2aa, transparent); }
  .side { flex: 1 1 0; display: flex; }
  .qat { align-items: flex-start; padding: 8px 0 0 9px; }
  .qat > * { margin-top: 3px; }
  .qat .app { margin-top: 0; }
  .app { margin-right: 7px; } .sep { width: 1px; height: 26px; background: #8794a5; }
  .save { margin-left: 14px; margin-right: 16px; } .undo { gap: 9px; color: #222; margin-right: 17px; } .redo { margin-right: 13px; }
  .custom { margin-left: 8px; padding-top: 8px; }
  h1 { margin: 0; font-size: 21px; font-weight: 400; line-height: 44px; color: #24303d; white-space: pre; }
  .win { justify-content: flex-end; }
  .win button { height: 34px; justify-content: center; border: 1px solid #6c7f94; border-top: 0; margin-left: -1px; background: linear-gradient(#dfeaf5, #e4ecf5 50%, #b9cadb 52%, #d6e3ef); width: 53px; }
  .win .close { width: 88px; background: linear-gradient(#e8ab9e, #d9735f 48%, #c23c24 52%, #d9674c); }
`, `
  <div class="side qat">
    <button class="app" aria-label="Application menu"><pp-icon name="ppt"></pp-icon></button><span class="sep"></span>
    <button class="save" aria-label="Save"><pp-icon name="save"></pp-icon></button>
    <button class="undo" aria-label="Undo"><pp-icon name="undo"></pp-icon><pp-icon name="down"></pp-icon></button>
    <button class="redo" aria-label="Repeat"><pp-icon name="redo"></pp-icon></button><span class="sep"></span>
    <button class="custom" aria-label="Customize toolbar"><pp-icon name="custom"></pp-icon></button>
  </div>
  <h1>Presentation2  -  Microsoft PowerPoint</h1>
  <div class="side win"><button aria-label="Minimize"><pp-icon name="min"></pp-icon></button><button aria-label="Maximize"><pp-icon name="max"></pp-icon></button><button class="close" aria-label="Close"><pp-icon name="close"></pp-icon></button></div>`);

define('pp-tabs', `
  :host { display: flex; height: 53px; align-items: flex-end; padding-right: 6px; font-size: 21px; }
  nav { flex: 1; display: flex; align-items: flex-end; }
  button { height: 43px; padding: 0 26px; color: #4b4f56; white-space: nowrap; }
  .file { width: 105px; justify-content: center; color: #fdece0; font-size: 20px; font-weight: 600; border-radius: 6px 6px 0 0; border: 1px solid #b5401c; border-bottom: 0; background: linear-gradient(#d7502a, #e23f16 45%, #e9561d 60%, #f59238); margin-right: 9px; }
  .home { width: 105px; justify-content: center; background: #fff; border: 1px solid #b9c2cd; border-bottom: 0; border-radius: 6px 6px 0 0; margin-bottom: -1px; height: 44px; position: relative; z-index: 1; }
  .tools { display: flex; align-items: center; gap: 16px; height: 46px; }
  .tools button { height: auto; padding: 0; }
`, `
  <nav><button class="file">File</button><button class="home">Home</button>${['Insert', 'Design', 'Transitions', 'Animations', 'Slide Show', 'Review', 'View'].map(t => `<button>${t}</button>`).join('')}</nav>
  <div class="tools"><button aria-label="Minimize ribbon"><pp-icon name="chevron"></pp-icon></button><button aria-label="Help"><pp-icon name="help"></pp-icon></button></div>`);

/* ---------- slide list ---------- */
define('pp-thumb', `
  :host { display: flex; margin: 0 11px 0 6px; padding: 7px; border: 1px solid transparent; border-radius: 4px; font: bold 20px/24px "DejaVu Sans", sans-serif; }
  :host([selected]) { border-color: #b19443; color: #5a430b; background: linear-gradient(90deg, transparent 40px, #b8ab8f66), linear-gradient(#ecd27a, #fbd365 45%, #fbd668 70%, #fff17a); }
  .n { width: 30px; text-align: center; padding-top: 8px; padding-right: 6px; }
  .page { flex: 1; aspect-ratio: 254 / 193; background: #fff; border: 1px solid #8c8f94; box-shadow: 1px 1px 4px #0007; }
`, `<span class="n"><slot></slot></span><div class="page"></div>`);

define('pp-slidelist', `
  :host { display: flex; flex-direction: column; width: 317px; border-right: 1px solid #8f949b; padding-top: 6px;
    background: linear-gradient(#b4b8bc 0, #c7cbd1 14px, #c6cad1 45%, #bbbcc8 80%, #babbc7); }
  .tabs { display: flex; height: 39px; }
  .tabs button { width: 118px; justify-content: center; line-height: 34px; align-items: flex-start; color: #44484f; border: 1px solid #92969c; background: #b2b5ba; border-left: 0; }
  .tabs .on { background: #ccd0d5; border-bottom: 0; width: 118px; }
  .tabs .x { flex: 1; justify-content: flex-end; padding: 11px 12px 0; border-right: 0; }
  .list { display: flex; flex-direction: column; gap: 8px; padding-top: 7px; }
`, `
  <div class="tabs"><button class="on">Slides</button><button>Outline</button><button class="x" aria-label="Close pane"><pp-icon name="x"></pp-icon></button></div>
  <div class="list"><pp-thumb>1</pp-thumb><pp-thumb selected>2</pp-thumb></div>`);

/* ---------- editing area ---------- */
define('pp-slide', `
  :host { display: block; flex: 1; background: #fefefe; border: 1px solid #96989c; box-shadow: 3px 5px 18px #4a4a52cc; padding: 209px 37px 0 53px; color: #000; font: 54px/92px "Liberation Serif", serif; }
  h2 { margin: 0; font-size: 53px; line-height: 92px; }
  ul { margin: 0; padding: 0; list-style: none; }
  li { display: flex; }
  li::before { content: ""; flex: none; width: 16px; height: 16px; margin: 38px 45px 0 3px; background: #000; }
  p { margin: 0; flex: 1; text-align-last: justify; }
  p span { display: block; }
  p span:last-child { text-align-last: start; }
`, `
  <h2>Ribbon</h2>
  <ul>
    <li><p><span>The ribbon is the panel at the top portion of the document </span><span>It has seven tabs: Home, Insert, Design, Animations, Slide </span><span>Show, Review and View.</span></p></li>
    <li><p><span>Each tab is divided into groups. The groups are logical </span><span>collections of features designed to perform function that </span><span>you will utilize in developing or editing your PowerPoint </span><span>slides</span></p></li>
  </ul>`);

define('pp-scroll', `
  :host { display: flex; flex-direction: column; width: 31px; background: #dde0e6; color: #5c6066; }
  button { justify-content: center; height: 32px; flex: none; }
  .track { flex: 1; display: flex; flex-direction: column; }
  .before { flex: 493 1 0; }
  .thumb { flex: 489 1 0; margin: 0 3px 0 1px; border: 1px solid #8a8e95; background: linear-gradient(90deg, #fbfbfd, #e4e5e9); display: flex; align-items: center; justify-content: center; }
  .jump { border-top: 1px solid #b5b9c0; height: 93px; padding-top: 7px; display: flex; flex-direction: column; }
  .jump button { height: 24px; margin-bottom: 6px; }
  :host([short]) { color: #9b9fa5; justify-content: space-between; }
`, el => el.hasAttribute('short')
  ? `<button aria-label="Up"><pp-icon name="bigup"></pp-icon></button><button aria-label="Down"><pp-icon name="bigdown"></pp-icon></button>`
  : `<button class="up" aria-label="Up"><pp-icon name="bigup"></pp-icon></button><div class="track"><div class="before"></div><div class="thumb"><pp-icon name="lines4"></pp-icon></div></div><button aria-label="Down"><pp-icon name="bigdown"></pp-icon></button>
     <div class="jump"><button aria-label="Previous slide"><pp-icon name="dblup"></pp-icon></button><button aria-label="Next slide"><pp-icon name="dbldown"></pp-icon></button></div>`);

define('pp-editor', `
  :host { display: flex; flex-direction: column; flex: 1; min-width: 0; border-left: 8px solid #f0f3f8; }
  .canvas { flex: 1; display: flex; border-left: 1px solid #8f949b; border-bottom: 2px solid #96999f; background: linear-gradient(#abadb1 0, #c4c8cd 10px, #c6cad0 30%, #c8c8d3 45%, #bcbec7 85%); }
  .stage { flex: 1; display: flex; padding: 24px 112px 21px 111px; overflow: hidden; }
  pp-scroll:not([short]) { padding-top: 6px; }
  .notes { display: flex; height: 82px; border-top: 8px solid #f0f3f8; background: #fff; }
  textarea { flex: 1; border: 1px solid #8f949b; border-top-width: 2px; border-right: 0; border-bottom: 0; resize: none; background: #fefefe; font-size: 28px; line-height: 38px; padding: 9px 18px; color: #2b2d30; outline: 0; overflow: hidden; }
`, `
  <div class="canvas"><div class="stage"><pp-slide></pp-slide></div><pp-scroll></pp-scroll></div>
  <div class="notes"><textarea aria-label="Notes">Click to add notes</textarea><pp-scroll short></pp-scroll></div>`);

/* ---------- status bar ---------- */
define('pp-status', `
  :host { display: flex; height: 42px; align-items: center; border-top: 1px solid #8f949b; border-bottom: 1px solid #4b6a86; background: linear-gradient(#ebecf0, #d4d7de 45%, #bcc0c8); color: #4a4e55; font-size: 21px; }
  .cell { height: 36px; display: flex; align-items: center; border-right: 1px solid #9a9ea6; line-height: 36px; padding: 0 16px 0 14px; white-space: nowrap; }
  .proof { padding: 0 17px 0 15px; } .fill { flex: 1; }
  .view { width: 35px; justify-content: center; height: 36px; }
  .on { width: 40px; margin: 0 0 0 6px; border: 2px solid #c89b35; border-radius: 3px; background: #f8dc7b; }
  .pct { padding: 0 14px 0 14px; }
  input { appearance: none; background: linear-gradient(#85898f, #85898f) center / 100% 2px no-repeat; width: 188px; height: 28px; }
  input::-webkit-slider-thumb { appearance: none; width: 18px; height: 26px; background: #f7f8fa; border: 2px solid #6e727a; border-radius: 2px 2px 9px 9px; }
  .fit { margin: 0 16px 0 14px; } .grip { align-self: flex-end; padding: 0 3px 2px 0; }
`, `
  <span class="cell">Slide 2 of 2</span><span class="cell">"Office Theme"</span>
  <button class="cell proof" aria-label="Spelling"><pp-icon name="spell"></pp-icon></button>
  <span class="cell fill"></span>
  <button class="view on" aria-label="Normal"><pp-icon name="normal"></pp-icon></button><button class="view" aria-label="Slide Sorter"><pp-icon name="sorter"></pp-icon></button><button class="view" aria-label="Reading View"><pp-icon name="reading"></pp-icon></button><button class="view" aria-label="Slide Show"><pp-icon name="show"></pp-icon></button>
  <span class="pct">80%</span>
  <button aria-label="Zoom out"><pp-icon name="minus"></pp-icon></button><input type="range" min="0" max="100" value="39" aria-label="Zoom"><button aria-label="Zoom in"><pp-icon name="plus"></pp-icon></button>
  <button class="fit" aria-label="Fit slide"><pp-icon name="fit"></pp-icon></button><span class="grip"><pp-icon name="grip"></pp-icon></span>`);

/* ---------- annotation drawn over the window ---------- */
define('pp-callout', `
  :host { position: absolute; inset: 0; overflow: hidden; pointer-events: none; }
  .box { position: absolute; top: 30px; left: -4px; right: -4px; height: 264px; border: 8px solid #f00; }
  svg { position: absolute; left: 640px; top: 290px; }
`, `<div class="box"></div>
  <svg width="80" height="160" viewBox="0 0 80 160" fill="none" stroke="#f00" stroke-width="6"><path d="M10 2L57 144"/><path d="M43 135L58 147L62 129" stroke-linecap="round"/><path d="M50 142L60 153L63 140Z" fill="#f00" stroke="none"/></svg>`);

define('pp-app', `
  :host { display: flex; flex-direction: column; min-height: 100vh; position: relative; overflow: hidden; padding: 0 10px 5px 7px;
    background: radial-gradient(ellipse 240px 60px at 420px 10px, #9fc8ee99, transparent), radial-gradient(ellipse 300px 60px at 1700px 10px, #9ccbf599, transparent),
      linear-gradient(#c3dbf0 0, #cfe2f5 40px, #f1f6fc 95px, #c8dcef 250px, #d6e4f3 450px, #93b1d1 460px, #9db9d6 1000px, #a9c6e2 100%); }
  pp-titlebar { margin-left: -7px; margin-right: -8px; padding-right: 9px; }
  .frame { flex: 1; display: flex; flex-direction: column; border: 1px solid #5a748e; border-top: 0; border-bottom: 0; }
  main { flex: 1; display: flex; }
`, `
  <pp-titlebar></pp-titlebar><pp-tabs></pp-tabs>
  <div class="frame"><pp-ribbon></pp-ribbon><main><pp-slidelist></pp-slidelist><pp-editor></pp-editor></main><pp-status></pp-status></div>
  <pp-callout></pp-callout>`);
</script>
</body>
</html>
